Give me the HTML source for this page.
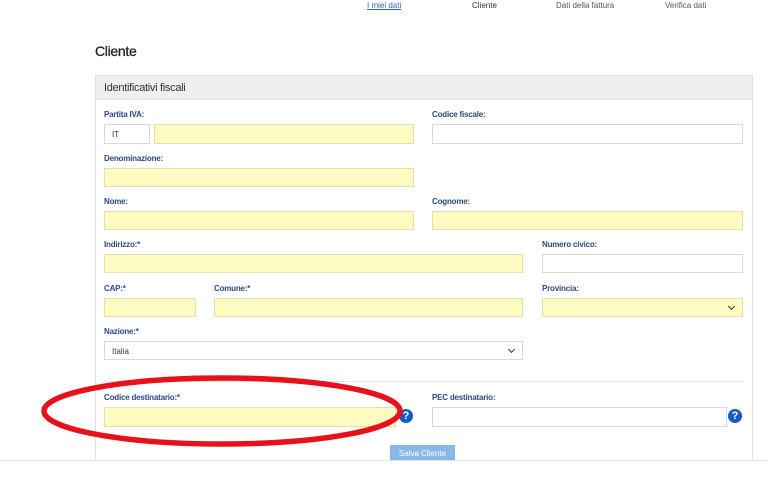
<!DOCTYPE html>
<html><head><meta charset="utf-8"><style>
*{margin:0;padding:0;box-sizing:border-box}
html,body{width:768px;height:486px;overflow:hidden}
body{background:#fff;position:relative;font-family:"Liberation Sans",sans-serif}
.a{position:absolute}
.nav{font-size:8px;color:#555;top:1px}
.lbl{position:absolute;font-size:8px;font-weight:bold;color:#2a4a82;letter-spacing:-0.2px}
.in{position:absolute;border:1px solid #d8d8d8;background:#fff}
.y{background:#fdfbc0;border-color:#e2e0b0}
.chev{position:absolute;right:8px;top:5px;width:5px;height:5px;border-right:1.8px solid #333;border-bottom:1.8px solid #333;transform:rotate(45deg)}
.q{position:absolute;width:14px;height:14px;border-radius:50%;background:#1659c8;color:#fff;font-size:11px;font-weight:bold;text-align:center;line-height:14px}
</style></head><body>
<div class="a nav" style="left:367px;color:#3566b8;text-decoration:underline">I miei dati</div>
<div class="a nav" style="left:472px;color:#333">Cliente</div>
<div class="a nav" style="left:556px">Dati della fattura</div>
<div class="a nav" style="left:665px">Verifica dati</div>
<div class="a" style="left:95px;top:43px;font-size:14px;color:#222;letter-spacing:-0.3px;-webkit-text-stroke:0.3px #222">Cliente</div>

<div class="a" style="left:95px;top:75px;width:658px;height:386px;border:1px solid #e0e0e0;border-bottom:none"></div>
<div class="a" style="left:96px;top:76px;width:656px;height:24px;background:#efefef;border-bottom:1px solid #e2e2e2"></div>
<div class="a" style="left:104px;top:82px;font-size:11px;color:#333;letter-spacing:-0.3px">Identificativi fiscali</div>

<div class="lbl" style="left:104px;top:110px">Partita IVA:</div>
<div class="in" style="left:104px;top:124px;width:46px;height:20px;font-size:8px;padding:5px 0 0 7px;color:#333">IT</div>
<div class="in y" style="left:154px;top:124px;width:260px;height:20px"></div>
<div class="lbl" style="left:432px;top:110px">Codice fiscale:</div>
<div class="in" style="left:432px;top:124px;width:311px;height:20px"></div>

<div class="lbl" style="left:104px;top:154px">Denominazione:</div>
<div class="in y" style="left:104px;top:168px;width:310px;height:19px"></div>

<div class="lbl" style="left:104px;top:197px">Nome:</div>
<div class="in y" style="left:104px;top:211px;width:310px;height:19px"></div>
<div class="lbl" style="left:432px;top:197px">Cognome:</div>
<div class="in y" style="left:432px;top:211px;width:311px;height:19px"></div>

<div class="lbl" style="left:104px;top:240px">Indirizzo:*</div>
<div class="in y" style="left:104px;top:254px;width:419px;height:19px"></div>
<div class="lbl" style="left:542px;top:240px">Numero civico:</div>
<div class="in" style="left:542px;top:254px;width:201px;height:19px"></div>

<div class="lbl" style="left:104px;top:284px">CAP:*</div>
<div class="in y" style="left:104px;top:298px;width:92px;height:19px"></div>
<div class="lbl" style="left:214px;top:284px">Comune:*</div>
<div class="in y" style="left:214px;top:298px;width:309px;height:19px"></div>
<div class="lbl" style="left:542px;top:284px">Provincia:</div>
<div class="in y" style="left:542px;top:298px;width:201px;height:19px"><div class="chev"></div></div>

<div class="lbl" style="left:104px;top:327px">Nazione:*</div>
<div class="in" style="left:104px;top:341px;width:419px;height:19px;font-size:8px;padding:5px 0 0 7px;color:#333">Italia<div class="chev"></div></div>

<div class="a" style="left:104px;top:381px;width:639px;height:1px;background:#e4e4e4"></div>

<div class="lbl" style="left:104px;top:393px">Codice destinatario:*</div>
<div class="in y" style="left:104px;top:407px;width:292px;height:20px"></div>
<div class="q" style="left:399px;top:409px">?</div>
<div class="lbl" style="left:432px;top:393px">PEC destinatario:</div>
<div class="in" style="left:432px;top:407px;width:295px;height:20px"></div>
<div class="q" style="left:728px;top:409px">?</div>

<div class="a" style="left:390px;top:445px;width:65px;height:17px;background:#8ab8e6;color:#fff;font-size:8px;text-align:center;line-height:17px">Salva Cliente</div>
<div class="a" style="left:0;top:460px;width:768px;height:26px;background:#fff;border-top:1px solid #e6e6e6"></div>

<svg class="a" style="left:0;top:0" width="768" height="486">
<ellipse cx="222" cy="411" rx="178" ry="33" fill="none" stroke="#e8101a" stroke-width="5.5"/>
</svg>
</body></html>
